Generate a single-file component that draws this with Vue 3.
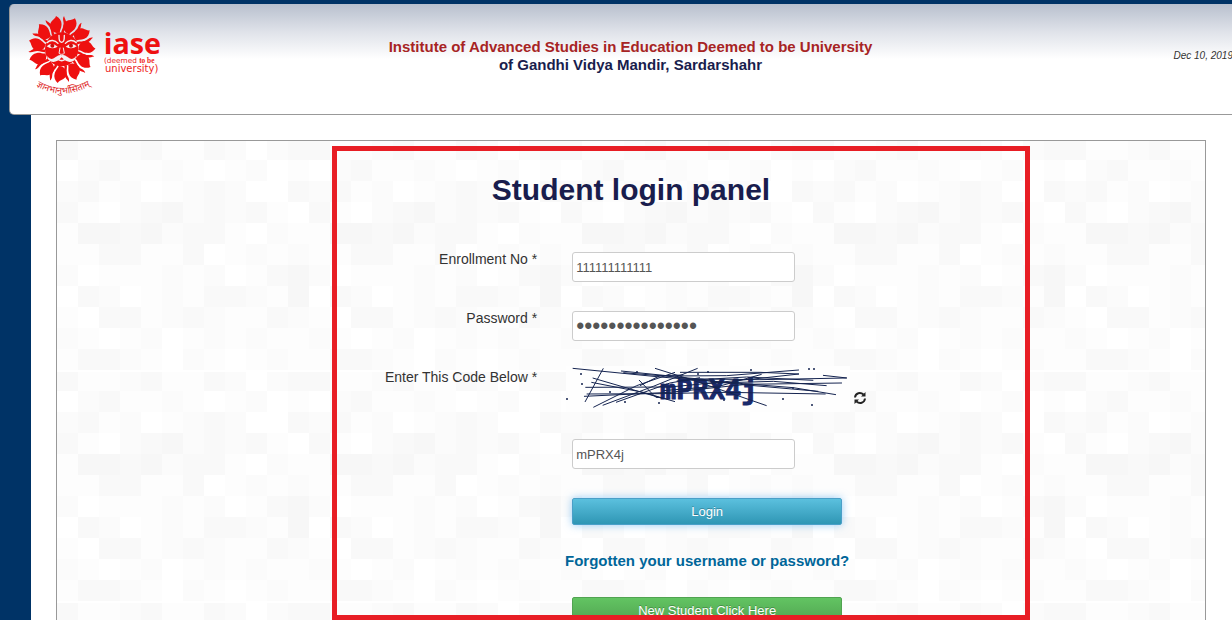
<template>
  <div class="page">
    <header class="header">
      <a href="#" class="logo" aria-label="iase">
        <svg width="134" height="84" viewBox="81 42 402 252">
          <g transform="translate(182 148)">
            <g v-for="n in 11" :key="n" :transform="`rotate(${n * 360 / 11 - 4})`" fill="#ee1010">
              <path d="M-12 -50 C-31 -54 -36 -74 -24 -86 C-17 -92 -12 -95 -10 -101 C0 -95 6 -86 5 -75 C4 -63 -2 -58 -2 -50 Z" />
              <path d="M2 -50 C4 -60 13 -68 11 -82 C10 -89 10 -94 14 -99 C15 -91 20 -86 19 -76 C18 -64 11 -60 10 -48 Z" />
            </g>
            <ellipse rx="50" ry="51" fill="#ee1010" />
            <g fill="none" stroke="#f4f0f2" stroke-width="4" stroke-linecap="round">
              <path d="M-8 -42 C-8 -25 -6 -22 0 -21 C6 -22 8 -25 8 -42" />
              <path d="M-44 -20 C-34 -30 -20 -28 -11 -18" />
              <path d="M44 -20 C34 -30 20 -28 11 -18" />
              <path d="M-5 -4 L-8 12 C-5 16 5 16 8 12 L5 -4" stroke-width="3" />
              <path d="M-9 31 Q0 37 9 31" stroke-width="5" />
            </g>
            <g fill="#f4f0f2">
              <path d="M-45 -9 Q-29 -23 -12 -8 Q-30 2 -45 -9 Z" />
              <path d="M45 -9 Q29 -23 12 -8 Q30 2 45 -9 Z" />
              <path d="M0 18 C-12 14 -18 28 -31 29 Q-39 28 -43 20 C-43 39 -18 46 0 24 C18 46 43 39 43 20 Q39 28 31 29 C18 28 12 14 0 18 Z" />
            </g>
            <circle cx="-28" cy="-11" r="6" fill="#c80f0f" />
            <circle cx="28" cy="-11" r="6" fill="#c80f0f" />
          </g>
          <path id="motto" d="M106 258 Q182 304 270 256" fill="none" />
          <text class="motto"><textPath href="#motto">ज्ञानभानुर्भासिताम्</textPath></text>
          <text x="308" y="163" class="brand">iase</text>
          <text x="309" y="190" class="sub">(deemed <tspan class="tobe">to be</tspan></text>
          <text x="312" y="217" class="uni">university)</text>
        </svg>
      </a>
      <div class="title">
        <div class="name">Institute of Advanced Studies in Education Deemed to be University</div>
        <div>of Gandhi Vidya Mandir, Sardarshahr</div>
      </div>
      <div class="date">Dec 10, 2019</div>
    </header>

    <main class="main">
      <section class="panel">
        <svg class="tiles" width="100%" height="100%" aria-hidden="true">
          <defs>
            <pattern id="tiles" width="252" height="231" patternUnits="userSpaceOnUse">
              <template v-for="(row, y) in tiles" :key="y">
                <rect v-for="(shade, x) in row" :key="x" :x="x * 21" :y="y * 21 - 2" width="21" height="21" :fill="shades[shade]" />
              </template>
            </pattern>
          </defs>
          <rect width="100%" height="100%" fill="url(#tiles)" />
        </svg>

        <form class="form" @submit.prevent>
          <h1>Student login panel</h1>

          <label for="enrollment">Enrollment No *</label>
          <input id="enrollment" v-model="enrollment" type="text">

          <label for="password">Password *</label>
          <input id="password" v-model="password" type="password">

          <label for="code">Enter This Code Below *</label>
          <div class="captcha">
            <svg width="276" height="40" viewBox="0 0 276 40" role="img" aria-label="mPRX4j">
              <rect x="-6" y="-4" width="284" height="46" fill="#fefefe" />
              <text x="88" y="29" class="captcha-text">mPRX4j</text>
              <g transform="translate(-12 -15) scale(0.3333)" stroke="#14234f" stroke-width="3" fill="none">
                <path d="M38 40 L300 66 L700 98 L828 119" />
                <path d="M130 40 L75 141" />
                <path d="M98 69 L300 128" />
                <path d="M94 82 L250 112 L345 140" />
                <path d="M76 97 L330 96 L600 70 L717 57" />
                <path d="M72 124 L330 112 L560 88 L846 84" />
                <path d="M80 117 L300 116 L500 112 L797 117" />
                <path d="M100 157 L230 92 L345 52" />
                <path d="M128 151 L280 94 L413 40" />
                <path d="M168 142 L330 84 L420 68" />
                <path d="M183 48 L330 63 L500 62 L717 45" />
                <path d="M190 53 L420 72 L600 74 L860 69" />
                <path d="M285 40 L400 76 L620 152" />
                <path d="M237 75 L285 125 L320 132" />
                <path d="M360 52 L600 52 L717 57" />
                <path d="M345 66 L560 90 L775 109" />
                <path d="M310 107 L480 93 L605 58" />
                <path d="M350 78 L560 66 L760 76" />
                <path d="M440 85 L640 79 L800 92" />
                <path d="M789 61 L861 69" />
                <path d="M240 92 L300 62 L370 60" />
              </g>
              <g fill="#14234f">
                <circle v-for="(dot, i) in dots" :key="i" :cx="dot[0]" :cy="dot[1]" r="1" />
              </g>
            </svg>
            <button type="button" class="reload" aria-label="Reload code">
              <svg width="14" height="14" viewBox="0 0 14 14">
                <g fill="none" stroke="#222" stroke-width="2">
                  <path d="M2 6.500 C2.500 1.800 7.500 1 10.500 3.500" />
                  <path d="M12 7.500 C11.500 12.200 6.500 13 3.500 10.500" />
                </g>
                <path d="M12.500 1 V5.500 H8 Z M1.500 13 V8.500 H6 Z" fill="#222" />
              </svg>
            </button>
          </div>

          <input id="code" v-model="code" type="text" class="second">

          <button type="submit" class="btn login second">Login</button>
          <a href="#" class="forgot second">Forgotten your username or password?</a>
          <button type="button" class="btn register second">New Student Click Here</button>
        </form>

        <div class="highlight"></div>
      </section>
    </main>
  </div>
</template>

<script setup>
import { ref } from 'vue';

const enrollment = ref('111111111111');
const password = ref('111111111111111');
const code = ref('mPRX4j');

const shades = ['#ffffff', '#fdfdfd', '#fbfbfb', '#f9f9f9', '#f7f7f7'];

const tiles = [
  [3, 1, 1, 2, 3, 1, 1, 3, 2, 0, 2, 3],
  [0, 2, 3, 1, 1, 2, 1, 0, 1, 2, 0, 1],
  [2, 3, 1, 2, 0, 1, 2, 3, 2, 0, 0, 3],
  [3, 1, 0, 2, 3, 4, 2, 3, 2, 3, 1, 0],
  [1, 4, 4, 3, 4, 2, 3, 3, 1, 0, 2, 1],
  [1, 1, 3, 3, 1, 1, 3, 0, 1, 2, 1, 2],
  [2, 0, 1, 1, 1, 2, 1, 2, 0, 1, 3, 4],
  [0, 3, 2, 0, 1, 2, 1, 3, 3, 2, 1, 4],
  [1, 0, 3, 3, 1, 2, 3, 2, 1, 1, 3, 2],
  [2, 1, 0, 1, 2, 0, 1, 2, 1, 2, 1, 1],
  [1, 3, 3, 2, 1, 0, 2, 1, 0, 1, 2, 1],
];

const dots = [
  [9, 4], [10, 14], [-5, 29], [38, 22], [53, 32], [87, 33], [85, 27], [65, 2],
  [126, 4], [136, 2], [152, 30], [179, 0], [237, -1], [242, -1], [221, 18], [211, 29], [240, 35],
];
</script>

<style>
body {
  margin: 0;
  background-color: #003366;
}
</style>

<style scoped>
.page {
  display: flex;
  flex-direction: column;
  height: 100vh;
  overflow: hidden;
  font-family: "Liberation Sans", Arial, sans-serif;
  font-size: 14px;
  color: #333;
}

.header {
  display: grid;
  grid-template-columns: 1fr auto 1fr;
  flex: none;
  box-sizing: border-box;
  height: 111px;
  margin: 4px -22px 0 9px;
  padding: 10px 20px 0 18px;
  border: 1px solid #999;
  border-top: 0;
  border-radius: 5px;
  background: linear-gradient(#b8c0ce, #dfe2e9 25%, #fff 50%);
}

.logo svg {
  display: block;
}

.motto {
  font-family: "Noto Sans Devanagari", "Noto Sans", sans-serif;
  font-size: 27px;
  fill: #d22;
}

.brand {
  font-family: "Open Sans", sans-serif;
  font-size: 86px;
  font-weight: 700;
  fill: #ee1010;
}

.sub {
  font-family: "DejaVu Sans", sans-serif;
  font-size: 22px;
  fill: #e22;
}

.tobe {
  font-family: "Liberation Serif", serif;
  font-weight: 700;
}

.uni {
  font-family: "DejaVu Sans", sans-serif;
  font-size: 30px;
  fill: #e22;
}

.title {
  padding-top: 24px;
  font-size: 15px;
  font-weight: bold;
  line-height: 18px;
  text-align: center;
  color: #191d4d;
}

.name {
  color: #a72424;
}

.date {
  padding-top: 36px;
  font-size: 10px;
  font-style: italic;
  line-height: 12px;
  text-align: right;
}

.main {
  display: flex;
  flex: 1;
  min-height: 0;
  margin-left: 31px;
  padding: 25px 26px 0 25px;
  background-color: #fff;
}

.panel {
  position: relative;
  flex: 1;
  overflow: hidden;
  border: 1px solid #999;
  border-bottom: 0;
}

.tiles {
  position: absolute;
  top: 0;
  left: 0;
}

.form {
  position: relative;
  display: grid;
  grid-template-columns: 42% 1fr;
  column-gap: 33px;
  row-gap: 29px;
  align-items: start;
  justify-items: start;
}

h1 {
  grid-column: 1 / 3;
  justify-self: center;
  margin: 29px 0 13px;
  font-size: 30px;
  line-height: 40px;
  color: #191d4d;
}

label {
  justify-self: end;
  padding-right: 2px;
  line-height: 14px;
}

.second {
  grid-column: 2;
}

input {
  box-sizing: border-box;
  width: 223px;
  height: 30px;
  padding: 0 3px;
  border: 1px solid #ccc;
  border-radius: 3px;
  background-color: #fff;
  font-family: inherit;
  font-size: 13px;
  color: #555;
}

input[type="password"] {
  font-size: 23px;
}

.captcha {
  display: flex;
  gap: 5px;
  height: 40px;
}

.captcha svg {
  display: block;
  overflow: visible;
}

.captcha-text {
  font-family: "DejaVu Sans Mono", monospace;
  font-size: 27px;
  font-weight: bold;
  fill: #1a2a6c;
  stroke: #1a2a6c;
}

.reload {
  align-self: flex-end;
  margin-bottom: 5px;
  padding: 0;
  border: 0;
  background: none;
}

.btn {
  width: 270px;
  height: 27px;
  padding: 0;
  border: 1px solid;
  border-radius: 2px;
  font-family: inherit;
  font-size: 13px;
  color: #fff;
  text-shadow: 0 -1px 0 rgba(0, 0, 0, 0.25);
}

.login {
  border-color: #4a9fc8;
  background: linear-gradient(#5bc0de, #2f96b4);
  box-shadow: 0 0 8px rgba(82, 168, 236, 0.6);
}

.register {
  border-color: #51a351;
  background: linear-gradient(#62c462, #51a351);
}

.forgot {
  display: flex;
  justify-content: center;
  width: 270px;
  font-size: 15px;
  font-weight: bold;
  line-height: 14px;
  white-space: nowrap;
  text-decoration: none;
  color: #006699;
}

.highlight {
  position: absolute;
  top: 5px;
  right: 175px;
  bottom: 0;
  left: 275px;
  border: 5px solid #e81e25;
  pointer-events: none;
}
</style>
